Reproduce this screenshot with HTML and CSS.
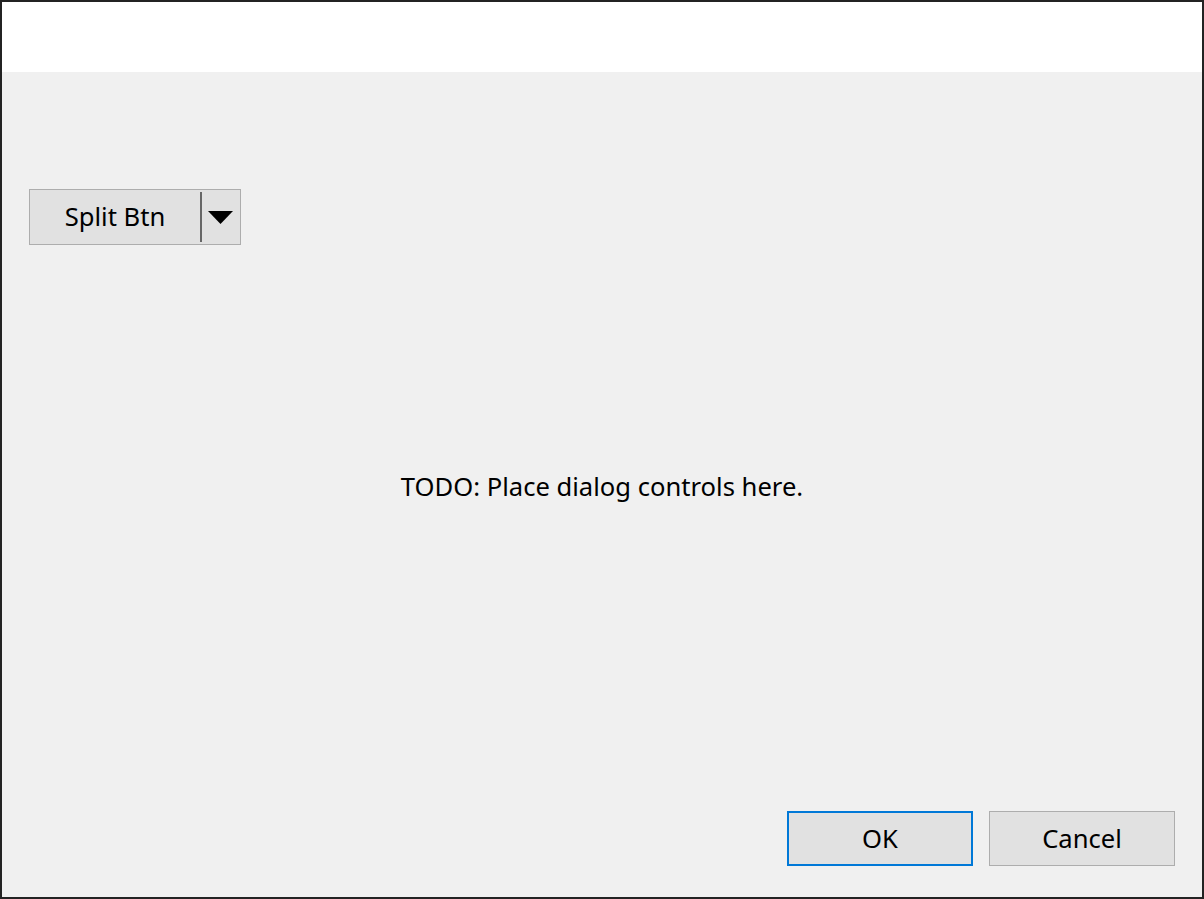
FILE: index.html
```html
<!DOCTYPE html>
<html>
<head>
<meta charset="utf-8">
<link rel="stylesheet" href="styles.css">
</head>
<body>
<div class="window">
  <div class="titlebar"></div>
  <div class="client">
    <div class="split">
      <span class="split-label">Split Btn</span>
      <span class="split-sep"></span>
      <span class="split-arrow">
        <svg width="25" height="13" viewBox="0 0 25 13"><polygon points="0,0 25,0 12.5,13" fill="#000"/></svg>
      </span>
    </div>
    <div class="todo">TODO: Place dialog controls here.</div>
    <div class="actions">
      <button class="btn btn-default">OK</button>
      <button class="btn">Cancel</button>
    </div>
  </div>
</div>
</body>
</html>
```

FILE: styles.css
```css
html, body {
  margin: 0;
  padding: 0;
  width: 1204px;
  height: 899px;
  overflow: hidden;
  background: #232323;
}

.window {
  margin: 2px;
  width: 1200px;
  height: 895px;
  display: flex;
  flex-direction: column;
  font-family: "Noto Sans", "Open Sans", sans-serif;
  font-size: 25.6px;
  color: #000;
}

.titlebar {
  height: 70px;
  background: #ffffff;
  flex: none;
}

.client {
  flex: 1;
  background: #f0f0f0;
  display: grid;
  grid-template: 1fr / 1fr;
}

.client > * {
  grid-area: 1 / 1;
}

.split {
  align-self: start;
  justify-self: start;
  margin: 117px 0 0 27px;
  width: 210px;
  height: 54px;
  border: 1px solid #adadad;
  background: #e1e1e1;
  display: flex;
  align-items: center;
}

.split-label {
  width: 170px;
  text-align: center;
  line-height: 54px;
}

.split-sep {
  width: 2px;
  height: 50px;
  background: #666;
}

.split-arrow {
  flex: 1;
  display: flex;
  justify-content: center;
  padding-right: 1px;
}

.split-arrow svg {
  display: block;
}

.todo {
  align-self: center;
  justify-self: center;
  margin-top: 3px;
  white-space: nowrap;
}

.actions {
  align-self: end;
  justify-self: end;
  margin: 0 27px 31px 0;
  display: flex;
  gap: 16px;
}

.btn {
  width: 186px;
  height: 55px;
  margin: 0;
  padding: 0;
  border: 1px solid #adadad;
  background: #e1e1e1;
  font: inherit;
  color: #000;
  box-sizing: border-box;
}

.btn-default {
  border: 2px solid #0078d7;
}
```
